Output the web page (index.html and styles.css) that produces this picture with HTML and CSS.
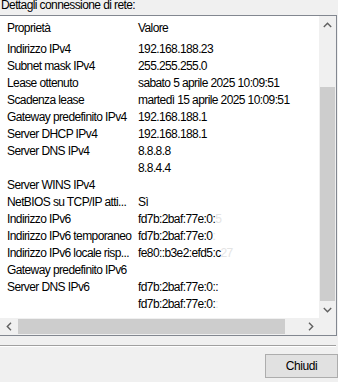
FILE: index.html
```html
<!DOCTYPE html>
<html>
<head>
<meta charset="utf-8">
<link rel="stylesheet" href="styles.css">
</head>
<body>
<div class="dlg">
  <div class="caption">Dettagli connessione di rete:</div>
  <div class="listbox">
    <div class="view">
      <div class="hdr"><span class="c1">Proprietà</span><span class="c2">Valore</span></div>
      <div class="row"><span class="c1">Indirizzo IPv4</span><span class="c2">192.168.188.23</span></div>
      <div class="row"><span class="c1">Subnet mask IPv4</span><span class="c2">255.255.255.0</span></div>
      <div class="row"><span class="c1">Lease ottenuto</span><span class="c2">sabato 5 aprile 2025 10:09:51</span></div>
      <div class="row"><span class="c1">Scadenza lease</span><span class="c2">martedì 15 aprile 2025 10:09:51</span></div>
      <div class="row"><span class="c1">Gateway predefinito IPv4</span><span class="c2">192.168.188.1</span></div>
      <div class="row"><span class="c1">Server DHCP IPv4</span><span class="c2">192.168.188.1</span></div>
      <div class="row"><span class="c1">Server DNS IPv4</span><span class="c2">8.8.8.8</span></div>
      <div class="row"><span class="c1"></span><span class="c2">8.8.4.4</span></div>
      <div class="row"><span class="c1">Server WINS IPv4</span><span class="c2"></span></div>
      <div class="row"><span class="c1">NetBIOS su TCP/IP atti...</span><span class="c2">Sì</span></div>
      <div class="row"><span class="c1">Indirizzo IPv6</span><span class="c2">fd7b:2baf:77e:0:<span class="faint">5</span></span></div>
      <div class="row"><span class="c1">Indirizzo IPv6 temporaneo</span><span class="c2">fd7b:2baf:77e:0<span class="faint">:</span></span></div>
      <div class="row"><span class="c1">Indirizzo IPv6 locale risp...</span><span class="c2">fe80::b3e2:efd5:c<span class="faint">27</span></span></div>
      <div class="row"><span class="c1">Gateway predefinito IPv6</span><span class="c2"></span></div>
      <div class="row"><span class="c1">Server DNS IPv6</span><span class="c2">fd7b:2baf:77e:0::</span></div>
      <div class="row"><span class="c1"></span><span class="c2">fd7b:2baf:77e:0:<span class="faint">:</span></span></div>
    </div>
    <div class="vscroll">
      <div class="btnv"><svg width="9" height="6" viewBox="0 0 9 6"><polyline points="0.8,5 4.5,1.3 8.2,5" fill="none" stroke="#606060" stroke-width="1.4"/></svg></div>
      <div class="vtrack"><div class="vthumb"></div></div>
      <div class="btnv"><svg width="9" height="6" viewBox="0 0 9 6"><polyline points="0.8,1 4.5,4.7 8.2,1" fill="none" stroke="#606060" stroke-width="1.4"/></svg></div>
    </div>
    <div class="hscroll">
      <div class="btnh"><svg width="6" height="9" viewBox="0 0 6 9"><polyline points="5,0.8 1.3,4.5 5,8.2" fill="none" stroke="#606060" stroke-width="1.4"/></svg></div>
      <div class="htrack"><div class="hthumb"></div></div>
      <div class="btnh"><svg width="6" height="9" viewBox="0 0 6 9"><polyline points="1,0.8 4.7,4.5 1,8.2" fill="none" stroke="#606060" stroke-width="1.4"/></svg></div>
    </div>
    <div class="corner"></div>
  </div>
  <div class="sep"></div>
  <div class="footer"><button class="btn">Chiudi</button></div>
</div>
</body>
</html>
```
FILE: styles.css
```css
html, body {
  margin: 0;
  padding: 0;
}
body {
  background: #f0f0f0;
  font-family: "Liberation Sans", Arial, sans-serif;
  font-size: 12px;
  letter-spacing: -0.6px;
  color: #000;
  width: 338px;
  height: 382px;
  overflow: hidden;
}
.dlg {
  margin-left: -1px;
  width: 338px;
}
.caption {
  height: 16px;
  margin-top: -1px;
  line-height: 12px;
  padding-left: 2px;
  white-space: nowrap;
}
.listbox {
  box-sizing: border-box;
  height: 321px;
  border: 1px solid #828790;
  background: #fff;
  display: grid;
  grid-template-columns: 1fr 17px;
  grid-template-rows: 1fr 17px;
}
.view {
  overflow: hidden;
  min-width: 0;
  min-height: 0;
}
.hdr {
  height: 24px;
  display: flex;
  align-items: center;
  white-space: nowrap;
}
.row {
  height: 17px;
  display: flex;
  align-items: center;
  white-space: nowrap;
}
.c1 {
  flex: none;
  width: 132px;
  box-sizing: border-box;
  padding-left: 7px;
}
.c2 {
  flex: none;
  padding-left: 6px;
}
.faint {
  color: #e4e4e4;
}
.vscroll {
  background: #f0f0f0;
  display: flex;
  flex-direction: column;
}
.btnv {
  height: 17px;
  flex: none;
  display: flex;
  align-items: center;
  justify-content: center;
}
.vtrack {
  flex: 1;
  display: flex;
  flex-direction: column;
  padding-top: 54px;
}
.vthumb {
  flex: 1;
  margin: 0 1px;
  background: #cdcdcd;
}
.hscroll {
  background: #f0f0f0;
  display: flex;
}
.btnh {
  width: 17px;
  flex: none;
  display: flex;
  align-items: center;
  justify-content: center;
}
.htrack {
  flex: 1;
  display: flex;
  padding: 1px 17px 1px 1px;
}
.hthumb {
  flex: 1;
  background: #cdcdcd;
}
.corner {
  background: #f0f0f0;
}
.sep {
  margin-top: 9px;
  width: 337px;
  border-top: 1px solid #a0a0a0;
  border-bottom: 1px solid #fff;
}
.footer {
  padding-left: 266px;
  padding-top: 7px;
}
.btn {
  display: block;
  width: 73px;
  height: 24px;
  box-sizing: border-box;
  border: 1px solid #adadad;
  background: #e1e1e1;
  font-family: inherit;
  font-size: 12px;
  letter-spacing: -0.4px;
  color: #000;
  padding: 0;
  margin: 0;
}
```
